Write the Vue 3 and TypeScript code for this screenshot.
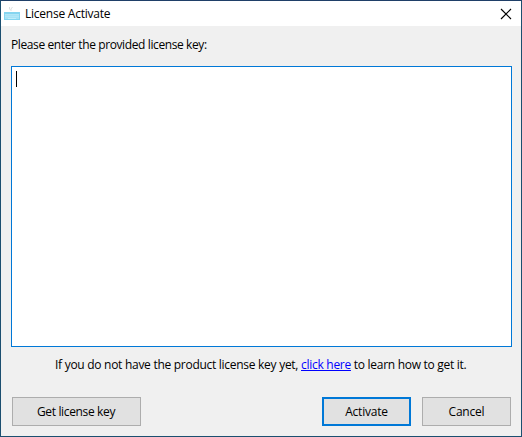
<script setup lang="ts">
const title: string = 'License Activate'
</script>

<template>
  <main class="window">
    <header class="titlebar">
      <svg class="app-icon" width="16" height="17" viewBox="0 0 16 17">
        <path d="M5.5 2v2l1 1M8.5 2L7 4v2" fill="none" stroke="#dde1e3" stroke-width="1" />
        <rect x="0" y="7" width="16" height="8" fill="#85d5f0" />
        <rect x="1" y="9" width="14" height="5" fill="#a5e2f6" />
        <path d="M1.5 9.5h13M1.5 11.5h13" stroke="#bdebf9" stroke-dasharray="1 1" />
        <path d="M4 13.5h8" stroke="#c0edfa" />
      </svg>
      <h1 class="title"><span class="t-title">{{ title }}</span></h1>
      <svg class="close" width="12" height="12" viewBox="0 0 12 12">
        <path d="M1 1L11 11M11 1L1 11" stroke="#000" stroke-width="1.15" />
      </svg>
    </header>
    <section class="body">
      <p class="label"><span class="t-label">Please enter the provided license key:</span></p>
      <div class="key-input" role="textbox"><span class="caret"></span></div>
      <p class="hint"><span class="t-hint">If you do not have the product license key yet, <a href="#">click here</a> to learn how to get it.</span></p>
      <footer class="actions">
        <button class="btn wide"><span class="t-get">Get license key</span></button>
        <button class="btn primary"><span class="t-act">Activate</span></button>
        <button class="btn"><span class="t-can">Cancel</span></button>
      </footer>
    </section>
  </main>
</template>

<style>
body {
  margin: 0;
  overflow: hidden;
}
</style>

<style scoped>
.window {
  box-sizing: border-box;
  width: 522px;
  height: 437px;
  display: flex;
  flex-direction: column;
  border: 1px solid #1b4f70;
  border-top-color: #1f3f68;
  background: #f0f0f0;
  font: 12px/16px "Segoe UI", "Open Sans", "Noto Sans", sans-serif;
  color: #000;
}
.titlebar {
  height: 25px;
  display: flex;
  align-items: center;
  padding: 0 9px 0 3px;
  background: #fff;
}
.app-icon {
  margin-right: 5px;
}
.title {
  flex: 1;
  margin: 0;
  font-size: 12px;
  font-weight: 400;
}
.body {
  flex: 1;
  display: flex;
  flex-direction: column;
  padding: 11px 9px 10px 10px;
}
p {
  margin: 0;
  white-space: nowrap;
}
.key-input {
  box-sizing: border-box;
  height: 281px;
  margin-top: 13px;
  padding: 4px;
  border: 1px solid #0078d7;
  background: #fff;
}
.caret {
  display: block;
  width: 1px;
  height: 16px;
  background: #000;
}
.hint {
  margin-top: 10px;
  padding-left: 44px;
}
.hint a {
  color: #00f;
  text-decoration: underline;
  text-underline-offset: 1px;
}
.actions {
  display: flex;
  gap: 11px;
  margin-top: auto;
  padding: 0 1px;
}
.btn {
  box-sizing: border-box;
  width: 89px;
  height: 29px;
  padding: 0;
  border: 1px solid #adadad;
  background: #e1e1e1;
  font: inherit;
  color: inherit;
  white-space: nowrap;
}
.wide {
  width: 129px;
  margin-right: auto;
  padding-right: 1px;
}
.primary {
  border: 2px solid #0078d7;
}
.t-title {
  letter-spacing: -0.23px;
}
.t-label {
  letter-spacing: -0.39px;
}
.t-hint {
  letter-spacing: -0.28px;
}
.t-get {
  letter-spacing: -0.35px;
}
.t-act {
  letter-spacing: -0.22px;
}
.t-can {
  letter-spacing: -0.2px;
}
</style>
